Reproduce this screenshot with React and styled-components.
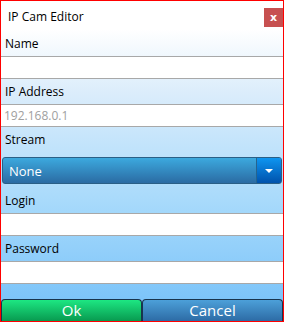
import React from "react";
import styled, { createGlobalStyle } from "styled-components";

const GlobalStyle = createGlobalStyle`
  html, body {
    margin: 0;
    padding: 0;
    background: #fff;
  }
  * {
    box-sizing: border-box;
  }
`;

const Window = styled.div`
  width: 284px;
  height: 322px;
  border: 1px solid #ff0000;
  display: flex;
  flex-direction: column;
  font-family: "Open Sans", "Noto Sans", sans-serif;
  background: linear-gradient(
    to bottom,
    #ffffff 0px,
    #ffffff 28px,
    #dcedfb 90px,
    #a8dafb 200px,
    #7cc4f9 300px
  );
  overflow: hidden;
`;

const TitleBar = styled.div`
  height: 30px;
  flex: none;
  display: flex;
  justify-content: space-between;
  align-items: flex-start;
`;

const Title = styled.div`
  font-size: 12px;
  color: #000;
  padding: 7px 0 0 7px;
`;

const CloseButton = styled.div`
  width: 19px;
  height: 19px;
  margin-top: 7px;
  background: #c75050;
  color: #fff;
  font-size: 11px;
  font-weight: bold;
  display: flex;
  align-items: center;
  justify-content: center;
  font-family: "DejaVu Sans", sans-serif;
`;

const Label = styled.div`
  height: 25px;
  flex: none;
  display: flex;
  align-items: center;
  padding-left: 4px;
  font-size: 12px;
  color: #000;
`;

const Input = styled.div`
  height: 23px;
  flex: none;
  background: #fff;
  border-top: 1px solid #a8a8a8;
  border-bottom: 1px solid #a8a8a8;
  display: flex;
  align-items: center;
  padding-left: 3px;
  font-size: 12px;
  color: #a0a0a0;
`;

const ComboWrap = styled.div`
  height: 36px;
  flex: none;
  padding: 5px 1px 4px 1px;
`;

const Combo = styled.div`
  height: 27px;
  display: flex;
  border: 1px solid #2a5f86;
  border-radius: 3px;
  overflow: hidden;
  background: linear-gradient(to bottom, #3ca9de, #2b6ba3);
`;

const ComboText = styled.div`
  flex: 1;
  display: flex;
  align-items: center;
  padding-left: 6px;
  color: #fff;
  font-size: 13px;
`;

const ComboArrow = styled.div`
  width: 25px;
  border-left: 1px solid #25648f;
  background: linear-gradient(to bottom, #0e95f0, #0052ac);
  display: flex;
  align-items: center;
  justify-content: center;
`;

const Spacer = styled.div`
  flex: 1;
`;

const ButtonRow = styled.div`
  height: 22px;
  flex: none;
  display: flex;
`;

const Button = styled.div`
  flex: 1;
  border: 1px solid #18344d;
  border-bottom: none;
  border-radius: 4px 4px 0 0;
  display: flex;
  align-items: center;
  justify-content: center;
  color: #fff;
  font-size: 15px;
  line-height: 1;
  background: ${(p) =>
    p.$ok
      ? "linear-gradient(to bottom, #1de782, #089a50)"
      : "linear-gradient(to bottom, #4ca0d9, #2d6ba5)"};
`;

const Field = ({ label, value }) => (
  <>
    <Label>{label}</Label>
    <Input>{value}</Input>
  </>
);

export default function App() {
  return (
    <>
      <GlobalStyle />
      <Window>
        <TitleBar>
          <Title>IP Cam Editor</Title>
          <CloseButton>x</CloseButton>
        </TitleBar>
        <Field label="Name" />
        <Field label="IP Address" value="192.168.0.1" />
        <Label>Stream</Label>
        <ComboWrap>
          <Combo>
            <ComboText>None</ComboText>
            <ComboArrow>
              <svg width="8" height="4" viewBox="0 0 8 4">
                <path d="M0 0 L8 0 L4 4 Z" fill="#fff" />
              </svg>
            </ComboArrow>
          </Combo>
        </ComboWrap>
        <Field label="Login" />
        <Field label="Password" />
        <Spacer />
        <ButtonRow>
          <Button $ok>Ok</Button>
          <Button>Cancel</Button>
        </ButtonRow>
      </Window>
    </>
  );
}
